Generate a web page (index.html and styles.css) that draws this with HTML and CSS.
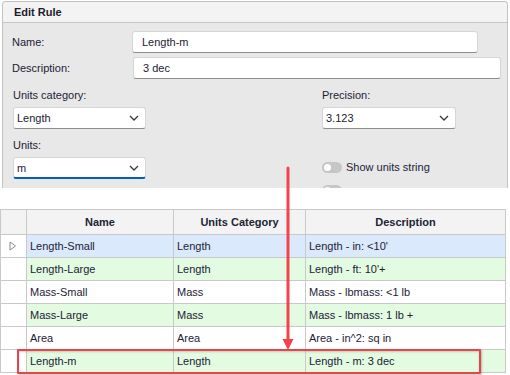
FILE: index.html
```html
<!DOCTYPE html>
<html>
<head>
<meta charset="utf-8">
<link rel="stylesheet" href="styles.css">
</head>
<body>
<div class="page">
  <section class="panel">
    <div class="panel-head">Edit Rule</div>
    <div class="panel-body">
      <div class="field-row">
        <label class="field-label">Name:</label>
        <div class="textbox tb-name">Length-m</div>
      </div>
      <div class="field-row row-gap">
        <label class="field-label">Description:</label>
        <div class="textbox tb-desc">3 dec</div>
      </div>
      <div class="columns">
        <div class="col col-left">
          <div class="col-label">Units category:</div>
          <div class="combo"><span>Length</span><svg class="chev" width="10" height="6" viewBox="0 0 10 6"><path d="M1 1 L5 5 L9 1" fill="none" stroke="#3a3a3a" stroke-width="1.3"/></svg></div>
          <div class="col-label">Units:</div>
          <div class="combo focused"><span>m</span><svg class="chev" width="10" height="6" viewBox="0 0 10 6"><path d="M1 1 L5 5 L9 1" fill="none" stroke="#3a3a3a" stroke-width="1.3"/></svg></div>
        </div>
        <div class="col col-right">
          <div class="col-label">Precision:</div>
          <div class="combo"><span>3.123</span><svg class="chev" width="10" height="6" viewBox="0 0 10 6"><path d="M1 1 L5 5 L9 1" fill="none" stroke="#3a3a3a" stroke-width="1.3"/></svg></div>
          <div class="toggle-row first"><span class="toggle"><span class="knob"></span></span><span>Show units string</span></div>
          <div class="toggle-row second"><span class="toggle"><span class="knob"></span></span></div>
        </div>
      </div>
    </div>
  </section>

  <div class="grid">
    <div class="cell rh hdr"></div>
    <div class="cell hdr">Name</div>
    <div class="cell hdr">Units Category</div>
    <div class="cell hdr">Description</div>

    <div class="cell rh"><svg width="8" height="10" viewBox="0 0 8 10"><path d="M1 1 L6.5 5 L1 9 Z" fill="none" stroke="#8c8c8c" stroke-width="1"/></svg></div>
    <div class="cell blue">Length-Small</div>
    <div class="cell blue">Length</div>
    <div class="cell blue">Length - in: &lt;10'</div>

    <div class="cell rh"></div>
    <div class="cell green">Length-Large</div>
    <div class="cell green">Length</div>
    <div class="cell green">Length - ft: 10'+</div>

    <div class="cell rh"></div>
    <div class="cell">Mass-Small</div>
    <div class="cell">Mass</div>
    <div class="cell">Mass - lbmass: &lt;1 lb</div>

    <div class="cell rh"></div>
    <div class="cell green">Mass-Large</div>
    <div class="cell green">Mass</div>
    <div class="cell green">Mass - lbmass: 1 lb +</div>

    <div class="cell rh"></div>
    <div class="cell">Area</div>
    <div class="cell">Area</div>
    <div class="cell">Area - in^2: sq in</div>

    <div class="cell rh"></div>
    <div class="cell green">Length-m</div>
    <div class="cell green">Length</div>
    <div class="cell green">Length - m: 3 dec</div>
  </div>

  <svg class="arrow" width="16" height="188" viewBox="0 0 16 188">
    <line x1="7" y1="2" x2="7" y2="176" stroke="#f2444c" stroke-width="3" stroke-linecap="round"/>
    <path d="M1.5 173 L12.5 173 L7 184 Z" fill="#f2444c"/>
  </svg>
  <div class="highlight"></div>
</div>
</body>
</html>
```

FILE: styles.css
```css
html, body {
  margin: 0;
  padding: 0;
  background: #ffffff;
}

body {
  font-family: "Liberation Sans", Arial, sans-serif;
  font-size: 11px;
  color: #1d2136;
  width: 510px;
  height: 375px;
  overflow: hidden;
}

.page {
  position: relative;
  padding-top: 1px;
}

.panel {
  margin-left: 2px;
  width: 506px;
  height: 187px;
  box-sizing: border-box;
  border: 1px solid #c2c2c2;
  border-bottom: none;
  border-radius: 4px 4px 0 0;
  background: #e8e8e8;
  overflow: hidden;
}

.panel-head {
  height: 20px;
  line-height: 20px;
  background: #f3f3f3;
  border-bottom: 1px solid #c6c6c6;
  padding-left: 11px;
  font-weight: bold;
  color: #1c1c2c;
}

.panel-body {
  padding: 8px 0 0 9px;
}

.field-row {
  display: flex;
  align-items: center;
}

.row-gap {
  margin-top: 4px;
}

.field-label {
  width: 120px;
}

.textbox {
  height: 22px;
  box-sizing: border-box;
  background: #ffffff;
  border: 1px solid #d6d6d6;
  border-bottom-color: #8d8d8d;
  border-radius: 3px;
  padding-left: 9px;
  line-height: 20px;
}

.tb-name {
  width: 346px;
}

.tb-desc {
  width: 368px;
  margin-left: 1px;
}

.columns {
  display: flex;
  padding-left: 1px;
}

.col-left {
  width: 133px;
}

.col-right {
  width: 134px;
  margin-left: 176px;
}

.col-label {
  margin-top: 9px;
  height: 14px;
  line-height: 14px;
  margin-bottom: 5px;
}

.combo {
  height: 22px;
  box-sizing: border-box;
  background: #ffffff;
  border: 1px solid #d6d6d6;
  border-bottom-color: #8d8d8d;
  border-radius: 3px;
  padding: 0 6px 0 3px;
  display: flex;
  align-items: center;
  justify-content: space-between;
}

.combo.focused {
  border-bottom: 2px solid #005fb8;
}

.chev {
  display: block;
}

.toggle-row {
  display: flex;
  align-items: center;
  gap: 4px;
  height: 14px;
}

.toggle-row.first {
  margin-top: 31px;
}

.toggle-row.second {
  margin-top: 11px;
  align-items: flex-start;
}

.toggle {
  width: 20px;
  height: 11px;
  border-radius: 6px;
  background: #c6c6c6;
  position: relative;
  display: inline-block;
}

.knob {
  position: absolute;
  left: 2px;
  top: 2px;
  width: 7px;
  height: 7px;
  border-radius: 50%;
  background: #ffffff;
}

.grid {
  margin-top: 21px;
  display: grid;
  grid-template-columns: 26px 147px 132px 200px;
  grid-template-rows: 25px;
  grid-auto-rows: 23px;
  border-left: 1px solid #c9c9c9;
  border-top: 1px solid #c9c9c9;
  width: 505px;
  box-sizing: content-box;
}

.cell {
  box-sizing: border-box;
  border-right: 1px solid #c9c9c9;
  border-bottom: 1px solid #c9c9c9;
  padding-left: 3px;
  line-height: 22px;
  white-space: nowrap;
  overflow: hidden;
  background: #ffffff;
}

.cell.hdr {
  height: 25px;
  line-height: 24px;
  background: #f3f3f3;
  font-weight: bold;
  text-align: center;
  padding-left: 0;
  color: #1c2433;
}

.cell.rh {
  padding-left: 0;
  display: flex;
  align-items: center;
  justify-content: center;
}

.cell.rh svg {
  margin-left: -1px;
}

.cell.blue {
  background: #dae9fc;
}

.cell.green {
  background: #e2fbe1;
}

.arrow {
  position: absolute;
  left: 281px;
  top: 166px;
}

.highlight {
  position: absolute;
  left: 17px;
  top: 349px;
  width: 464px;
  height: 25px;
  box-sizing: border-box;
  border: 2px solid #ea434b;
  border-radius: 1px;
  box-shadow: 1px 1px 2px rgba(60, 90, 60, 0.35), inset 0 1px 2px rgba(60, 100, 60, 0.25);
}
```
